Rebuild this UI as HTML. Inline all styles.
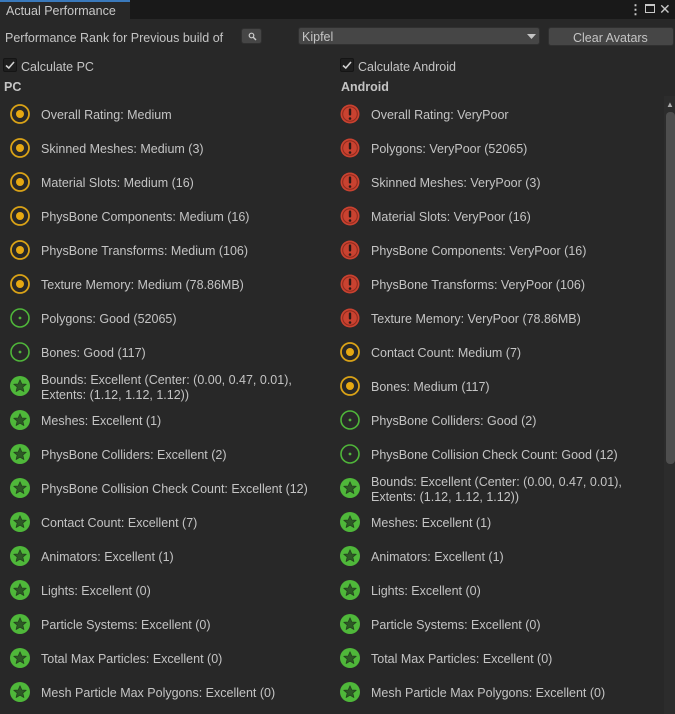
<!DOCTYPE html>
<html><head><meta charset="utf-8"><style>
body{margin:0;width:675px;height:714px;background:#282828;overflow:hidden;font-family:"Liberation Sans",sans-serif;font-size:12.5px;color:#c4c4c4;position:relative}
.a{position:absolute;white-space:nowrap}
.bar{position:absolute;left:0;top:0;width:675px;height:19px;background:#191919}
.tab{position:absolute;left:0;top:0;width:130px;height:19px;background:#282828;border-top:2px solid #3a79bb;box-sizing:border-box}
.btn{position:absolute;background:#464646;border:1px solid #303030;border-radius:3px;box-sizing:border-box}
.cb{position:absolute;width:14px;height:14px;background:#1e1e1e;border:1px solid #151515;border-radius:2px;box-sizing:border-box}
svg.i{position:absolute;width:22px;height:22px}
</style></head><body>
<svg width="0" height="0" style="position:absolute">
<defs>
<symbol id="m" viewBox="0 0 22 22"><circle cx="11" cy="11" r="9" fill="none" stroke="#d9a217" stroke-width="1.8"/><circle cx="11" cy="11" r="4" fill="#e6a812"/></symbol>
<symbol id="p" viewBox="0 0 22 22"><circle cx="11" cy="11" r="9.5" fill="#c94230"/><circle cx="11" cy="11" r="7.3" fill="none" stroke="#8f2a1d" stroke-width="1"/><rect x="9.8" y="5.5" width="2.4" height="7" rx="1" fill="#2a1a18"/><circle cx="11" cy="15.5" r="1.3" fill="#2a1a18"/></symbol>
<symbol id="g" viewBox="0 0 22 22"><circle cx="11" cy="11" r="9" fill="none" stroke="#4fb53a" stroke-width="1.6"/><circle cx="11" cy="11" r="1.4" fill="#4fb53a"/></symbol>
<symbol id="e" viewBox="0 0 22 22"><circle cx="11" cy="11" r="10" fill="#4fb83a"/><path d="M11 4.8 L12.8 9 L17.2 9.3 L13.8 12.1 L14.9 16.5 L11 14.1 L7.1 16.5 L8.2 12.1 L4.8 9.3 L9.2 9 Z" fill="#2e5a26" stroke="#24421e" stroke-width="0.8" stroke-linejoin="round"/></symbol>
<symbol id="ck" viewBox="0 0 14 14"><path d="M3 7.5 L5.8 10 L11 4" fill="none" stroke="#d0d0d0" stroke-width="1.6"/></symbol>
</defs></svg>
<div class="bar"></div><div class="tab"></div>
<div class="a" style="left:6px;top:4px;font-size:12.5px;color:#c8c8c8">Actual Performance</div>
<div class="a" style="left:629px;top:2px;color:#c8c8c8;font-size:13px;font-weight:bold">⋮</div>
<div class="a" style="left:645px;top:4px;width:10px;height:9px;border:1.5px solid #c8c8c8;border-top-width:2.5px;box-sizing:border-box"></div>
<div class="a" style="left:659px;top:1px;color:#c8c8c8;font-size:14px">✕</div>
<div class="a" style="left:5px;top:31px">Performance Rank for Previous build of</div>
<div class="btn" style="left:241px;top:28px;width:21px;height:16px"><svg class="a" style="left:6px;top:3px" width="9" height="9"><circle cx="3.5" cy="3.5" r="2.3" fill="none" stroke="#ccc" stroke-width="1.2"/><path d="M5 5 L8 8" stroke="#ccc" stroke-width="1.4"/></svg></div>
<div class="btn" style="left:298px;top:27px;width:242px;height:18px"><span class="a" style="left:3px;top:2px">Kipfel</span><svg class="a" style="left:228px;top:6px" width="9" height="6"><path d="M0 0 L9 0 L4.5 5 Z" fill="#c4c4c4"/></svg></div>
<div class="btn" style="left:548px;top:27px;width:126px;height:19px"><span class="a" style="left:24px;top:3px">Clear Avatars</span></div>
<div class="cb" style="left:3px;top:58px"><svg width="14" height="14" style="position:absolute;left:-1px;top:-1px"><use href="#ck"/></svg></div>
<div class="a" style="left:21px;top:60px">Calculate PC</div>
<div class="cb" style="left:340px;top:58px"><svg width="14" height="14" style="position:absolute;left:-1px;top:-1px"><use href="#ck"/></svg></div>
<div class="a" style="left:358px;top:60px">Calculate Android</div>
<div class="a" style="left:4px;top:80px;font-weight:bold">PC</div>
<div class="a" style="left:341px;top:80px;font-weight:bold">Android</div>
<div class="a" style="left:664px;top:96px;width:11px;height:618px;background:#2c2c2c"></div>
<div class="a" style="left:666px;top:100px;color:#aaa;font-size:8px">▲</div>
<div class="a" style="left:666px;top:112px;width:9px;height:352px;background:#4e4e4e;border-radius:4px"></div>
<div id="L"></div>
<script>
var L=[["m","Overall Rating: Medium"],["m","Skinned Meshes: Medium (3)"],["m","Material Slots: Medium (16)"],["m","PhysBone Components: Medium (16)"],["m","PhysBone Transforms: Medium (106)"],["m","Texture Memory: Medium (78.86MB)"],["g","Polygons: Good (52065)"],["g","Bones: Good (117)"],["e","Bounds: Excellent (Center: (0.00, 0.47, 0.01),<br>Extents: (1.12, 1.12, 1.12))"],["e","Meshes: Excellent (1)"],["e","PhysBone Colliders: Excellent (2)"],["e","PhysBone Collision Check Count: Excellent (12)"],["e","Contact Count: Excellent (7)"],["e","Animators: Excellent (1)"],["e","Lights: Excellent (0)"],["e","Particle Systems: Excellent (0)"],["e","Total Max Particles: Excellent (0)"],["e","Mesh Particle Max Polygons: Excellent (0)"]];
var R=[["p","Overall Rating: VeryPoor"],["p","Polygons: VeryPoor (52065)"],["p","Skinned Meshes: VeryPoor (3)"],["p","Material Slots: VeryPoor (16)"],["p","PhysBone Components: VeryPoor (16)"],["p","PhysBone Transforms: VeryPoor (106)"],["p","Texture Memory: VeryPoor (78.86MB)"],["m","Contact Count: Medium (7)"],["m","Bones: Medium (117)"],["g","PhysBone Colliders: Good (2)"],["g","PhysBone Collision Check Count: Good (12)"],["e","Bounds: Excellent (Center: (0.00, 0.47, 0.01),<br>Extents: (1.12, 1.12, 1.12))"],["e","Meshes: Excellent (1)"],["e","Animators: Excellent (1)"],["e","Lights: Excellent (0)"],["e","Particle Systems: Excellent (0)"],["e","Total Max Particles: Excellent (0)"],["e","Mesh Particle Max Polygons: Excellent (0)"]];
var h="";
function put(a,ix,tx){a.forEach(function(r,i){var c=114+34*i;h+='<svg class="i" style="left:'+(ix-11)+'px;top:'+(c-11)+'px"><use href="#'+r[0]+'"/></svg>';var two=r[1].indexOf("<br>")>=0;h+='<div class="a" style="left:'+tx+'px;top:'+(two?c-13:c-6)+'px;line-height:15px">'+r[1]+'</div>';});}
put(L,20,41);put(R,350,371);
document.getElementById("L").innerHTML=h;
</script>
</body></html>
